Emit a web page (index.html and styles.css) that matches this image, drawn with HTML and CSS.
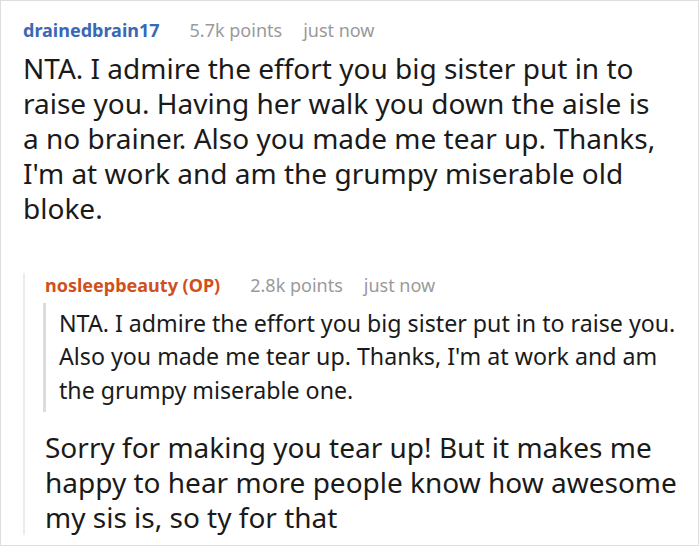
FILE: index.html
```html
<!DOCTYPE html>
<html>
<head>
<meta charset="utf-8">
<link rel="stylesheet" href="styles.css">
</head>
<body>
<div class="card">
  <div class="comment">
    <div class="meta">
      <span class="author">drainedbrain17</span>
      <span class="points">5.7k points</span>
      <span class="time">just now</span>
    </div>
    <p class="body main-body">NTA. I admire the effort you big sister put in to raise you. Having her walk you down the aisle is a no brainer. Also you made me tear up. Thanks, I'm at work and am the grumpy miserable old bloke.</p>
    <div class="reply">
      <div class="meta">
        <span class="author op">nosleepbeauty (OP)</span>
        <span class="points">2.8k points</span>
        <span class="time">just now</span>
      </div>
      <blockquote class="quote">NTA. I admire the effort you big sister put in to raise you. Also you made me tear up. Thanks, I'm at work and am the grumpy miserable one.</blockquote>
      <p class="body reply-body">Sorry for making you tear up! But it makes me happy to hear more people know how awesome my sis is, so ty for that</p>
    </div>
  </div>
</div>
</body>
</html>
```
FILE: styles.css
```css
html, body {
  margin: 0;
  padding: 0;
  background: #fff;
}
.card {
  box-sizing: border-box;
  width: 699px;
  height: 546px;
  border: 1px solid #dedede;
  overflow: hidden;
  font-family: "Noto Sans", "Open Sans", sans-serif;
  color: #1a1a1a;
}
.comment {
  padding: 17px 0 0 22px;
}
.meta {
  font-size: 18px;
  line-height: 24px;
  display: flex;
}
.author {
  font-weight: 700;
  color: #3a68b4;
  margin-right: 30px;
}
.author.op {
  color: #d0501c;
}
.points, .time {
  color: #9a9a9a;
}
.points {
  margin-right: 21px;
}
.body {
  margin: 8.5px 0 0 0;
  font-size: 28px;
  line-height: 35px;
}
.main-body {
  width: 638px;
}
.reply {
  margin: 47px 0 0 0;
  border-left: 2px solid #ececec;
  padding-left: 20px;
  width: 650px;
}
.quote {
  margin: 6px 0 0 -2px;
  border-left: 3px solid #dcdcdc;
  padding: 4px 0 5px 13px;
  font-size: 23.2px;
  line-height: 33.5px;
  width: 630px;
}
.reply-body {
  margin-top: 17.5px;
  width: 650px;
}
```
